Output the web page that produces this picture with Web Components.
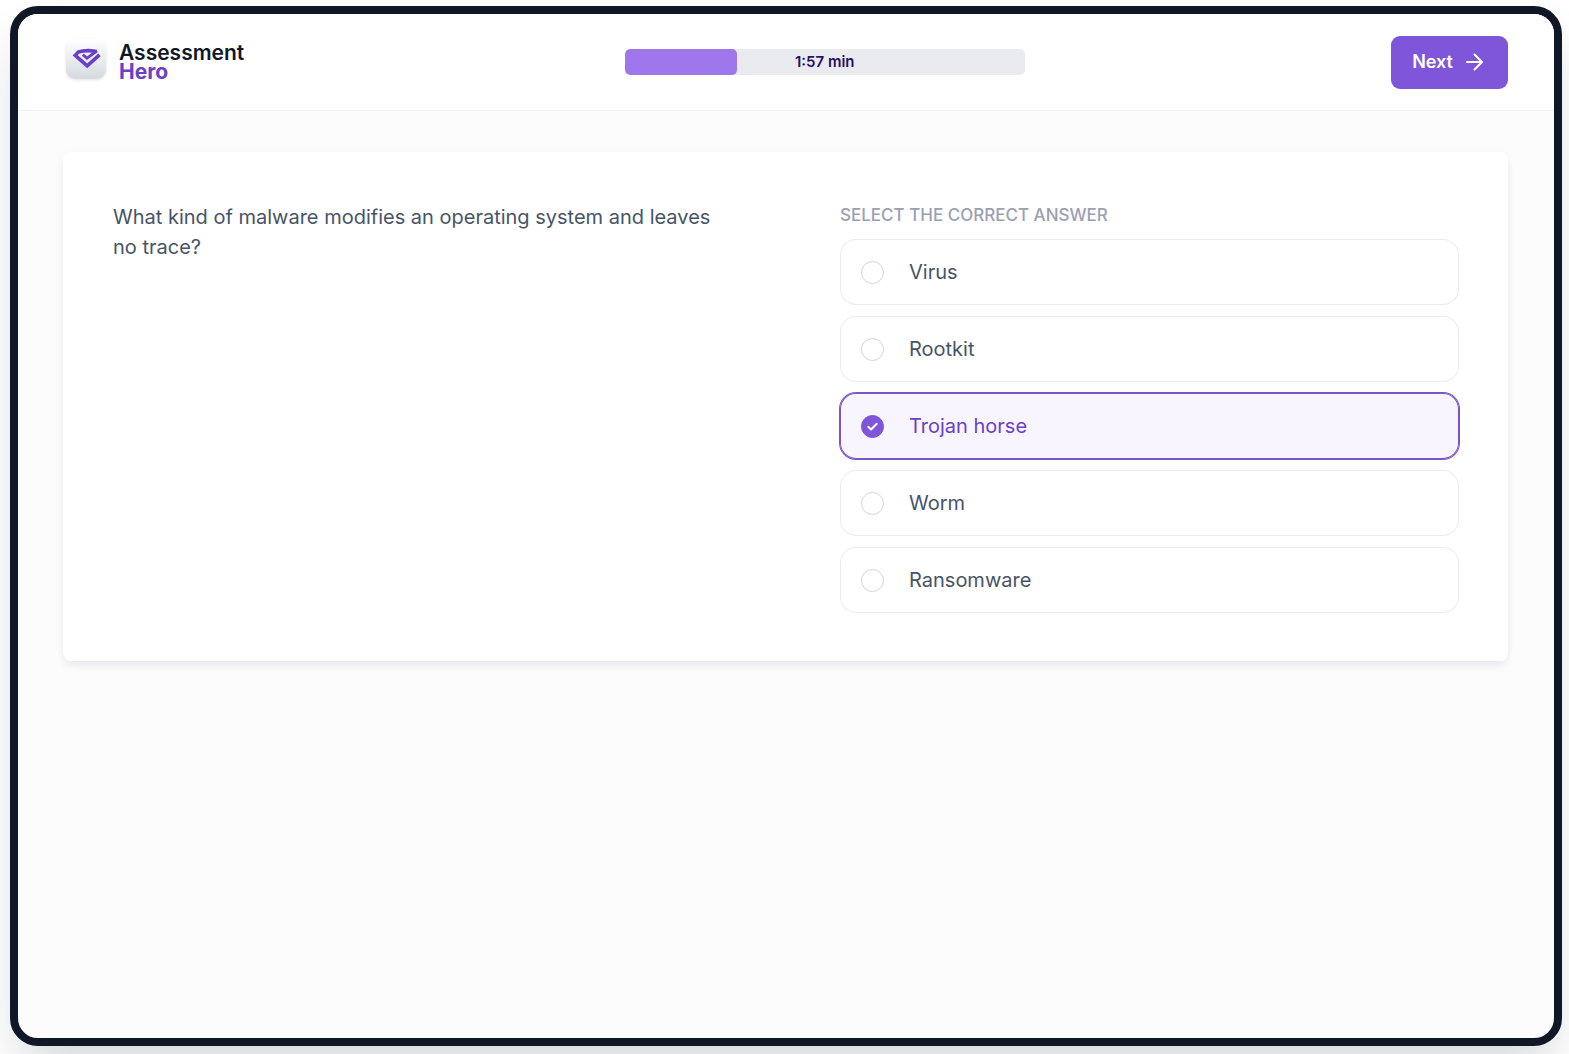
<!DOCTYPE html>
<html lang="en">
<head>
<meta charset="utf-8">
<meta name="viewport" content="width=device-width, initial-scale=1">
<title>Assessment Hero</title>
<style>
  html, body { height: 100%; }
  body {
    margin: 0; background: #fff; overflow: hidden;
    font-family: Inter, "Liberation Sans", sans-serif; color: #475467;
    --purple: #7f56d9; --purple-dark: #6941c6; --ink: #101828;
  }
</style>
</head>
<body>
<app-frame>
  <app-header slot="header">
    <brand-logo></brand-logo>
    <time-bar value="28" label="1:57 min"></time-bar>
    <next-button>Next</next-button>
  </app-header>
  <question-card>
    <span slot="question">What kind of malware modifies an operating system and leaves no trace?</span>
    <answer-group>
      <span slot="legend">SELECT THE CORRECT ANSWER</span>
      <answer-option>Virus</answer-option>
      <answer-option>Rootkit</answer-option>
      <answer-option checked>Trojan horse</answer-option>
      <answer-option>Worm</answer-option>
      <answer-option>Ransomware</answer-option>
    </answer-group>
  </question-card>
</app-frame>
<script>
const define = (name, html, setup) => customElements.define(name, class extends HTMLElement {
  connectedCallback() {
    if (this.shadowRoot) return;
    const root = this.attachShadow({ mode: "open" });
    root.innerHTML = `<style>*{box-sizing:border-box}</style>` + html;
    if (setup) setup(this, root);
  }
});

define("app-frame", `
<style>
  :host { display: flex; box-sizing: border-box; height: 100vh; padding: 6px 7px 8px 10px; }
  .frame { flex: 1; display: flex; flex-direction: column; border: 8px solid var(--ink); border-radius: 28px;
    background: #fcfcfd; overflow: hidden; box-shadow: 0 25px 50px -12px rgb(16 24 40 / .2); }
  main { flex: 1; padding: 41px 46px 41px 45px; }
</style>
<div class="frame"><slot name="header"></slot><main><slot></slot></main></div>`);

define("app-header", `
<style>
  :host { display: block; }
  header { display: flex; justify-content: space-between; align-items: center; height: 97px;
    padding: 0 46px 0 48px; background: #fff; border-bottom: 1px solid #f0f0f2; }
</style>
<header><slot></slot></header>`);

define("brand-logo", `
<style>
  :host { display: block; }
  a { display: flex; align-items: flex-start; gap: 13px; padding-right: 14px; text-decoration: none; }
  .tile { width: 40px; height: 40px; border-radius: 9px;
    background: linear-gradient(#fff, #d5d9df); box-shadow: 0 1px 3px rgb(16 24 40 / .12); }
  svg { display: block; }
  .name { display: flex; flex-direction: column; padding: 4px 0; font-size: 21px; line-height: 19px; font-weight: 600; color: var(--ink); }
  b { font-weight: 700; color: var(--purple-dark); }
</style>
<a href="#" aria-label="Assessment Hero">
  <span class="tile"><svg width="40" height="40" viewBox="0 0 40 40" fill="none" stroke="#6941c6">
    <path stroke-width="3.6" d="M30.5 12.4C25 11.4 17 11.5 12.3 13L9.2 16.3 21.2 26.8 33.5 15.8"/><path stroke-width="2.8" d="M16.8 15.6L21 19.2 31 11.8"/></svg></span>
  <span class="name"><span>Assessment</span><b>Hero</b></span>
</a>`);

define("time-bar", `
<style>
  :host { display: block; flex: 0 1 400px; }
  .track { display: grid; height: 26px; border-radius: 5px; background: #eaebef; overflow: hidden; }
  .fill, .label { grid-area: 1 / 1; }
  .fill { border-radius: 5px; background: #9e77ed; }
  .label { place-self: center; font-size: 15px; line-height: 26px; font-weight: 600; color: #2a1065; }
</style>
<div class="track" role="progressbar" aria-label="Time left" aria-valuemin="0" aria-valuemax="100">
  <div class="fill"></div><span class="label"></span></div>`, (el, root) => {
  const value = el.getAttribute("value");
  root.querySelector(".track").setAttribute("aria-valuenow", value);
  root.querySelector(".fill").style.width = value + "%";
  root.querySelector(".label").textContent = el.getAttribute("label");
});

define("next-button", `
<style>
  :host { display: block; }
  button { display: flex; align-items: center; gap: 9px; height: 53px; padding: 0 21px; border: 0; border-radius: 9px;
    background: var(--purple); color: #fff; font: 600 18px/26px Inter, sans-serif; cursor: pointer; }
</style>
<button type="button"><slot></slot><svg width="25" height="24" viewBox="0 0 25 24" fill="none" stroke="#fff" stroke-width="2" stroke-linecap="round" stroke-linejoin="round"><path d="M5 12h15M12.5 4.5l7.5 7.5-7.5 7.5"/></svg></button>`);

define("question-card", `
<style>
  :host { display: block; }
  section { display: grid; grid-template-columns: minmax(0, 1fr) minmax(0, 1fr); gap: 108px; padding: 50px 49px 48px 50px;
    background: #fff; border-radius: 8px; box-shadow: 0 6px 10px -2px rgb(16 24 40 / .07), 0 2px 12px rgb(16 24 40 / .03); }
  p { margin: 0; font-size: 20px; line-height: 30px; }
</style>
<section><p><slot name="question"></slot></p><slot></slot></section>`);

define("answer-group", `
<style>
  :host { display: block; }
  .group { display: flex; flex-direction: column; gap: 11px; }
  .legend { font-size: 17px; line-height: 26px; font-weight: 500; color: #9a9fb2; }
</style>
<div class="group" role="radiogroup" aria-labelledby="legend"><span class="legend" id="legend"><slot name="legend"></slot></span><slot></slot></div>`, el => {
  el.addEventListener("change", e => {
    for (const option of el.querySelectorAll("answer-option")) {
      if (option !== e.target) option.shadowRoot.querySelector("input").checked = false;
    }
  });
});

define("answer-option", `
<style>
  :host { display: block; }
  label { display: flex; align-items: center; gap: 25px; height: 66px; padding: 0 21px; border-radius: 16px;
    box-shadow: inset 0 0 0 1px #eaecf0; font-size: 20px; line-height: 30px; cursor: pointer; }
  .mark { display: grid; width: 23px; height: 23px; }
  input, svg { grid-area: 1 / 1; }
  input { appearance: none; width: 23px; height: 23px; margin: 0; border: 1px solid #d0d5dd; border-radius: 50%; background: #fff; }
  input:checked { border-color: var(--purple); background: var(--purple); }
  svg { visibility: hidden; pointer-events: none; z-index: 1; }
  input:checked + svg { visibility: visible; }
  label:has(input:checked) { background: #f9f5ff; color: var(--purple-dark);
    box-shadow: inset 0 0 0 1px #7a54c8, 0 0 0 1px #7a54c8; }
</style>
<label><span class="mark"><input type="radio" name="answer"><svg width="23" height="23" viewBox="0 0 23 23" fill="none" stroke="#fff" stroke-width="2" stroke-linecap="round" stroke-linejoin="round"><path d="M7.3 11.8l2.8 2.7 5.6-5.7"/></svg></span><slot></slot></label>`, (el, root) => {
  const input = root.querySelector("input");
  input.checked = el.hasAttribute("checked");
  input.addEventListener("change", () => el.dispatchEvent(new Event("change", { bubbles: true })));
});
</script>
</body>
</html>
